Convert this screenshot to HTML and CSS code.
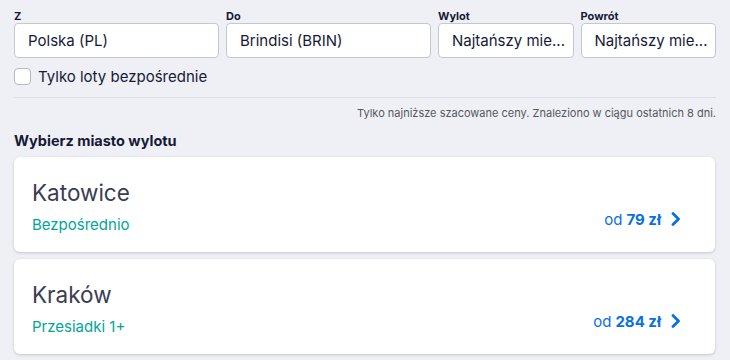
FILE: index.html
```html
<!DOCTYPE html>
<html lang="pl">
<head>
<meta charset="utf-8">
<link rel="stylesheet" href="styles.css">
</head>
<body>
<div class="page">
  <div class="fields">
    <div class="field f-wide">
      <label class="lbl">Z</label>
      <div class="input">Polska (PL)</div>
    </div>
    <div class="field f-wide">
      <label class="lbl">Do</label>
      <div class="input">Brindisi (BRIN)</div>
    </div>
    <div class="field f-narrow">
      <label class="lbl">Wylot</label>
      <div class="input">Najtańszy mie...</div>
    </div>
    <div class="field f-narrow">
      <label class="lbl">Powrót</label>
      <div class="input">Najtańszy mie...</div>
    </div>
  </div>
  <div class="check-row">
    <span class="checkbox"></span>
    <span class="check-label">Tylko loty bezpośrednie</span>
  </div>
  <hr class="divider">
  <p class="note">Tylko najniższe szacowane ceny. Znaleziono w ciągu ostatnich 8 dni.</p>
  <h2 class="heading">Wybierz miasto wylotu</h2>
  <div class="cards">
    <div class="card">
      <div class="card-main">
        <div class="city">Katowice</div>
        <div class="stops">Bezpośrednio</div>
      </div>
      <div class="price">od <b>79 zł</b>
        <svg class="chev" width="10" height="14" viewBox="0 0 10 14"><path d="M2 1.5 L7.5 7 L2 12.5" fill="none" stroke="#0770e3" stroke-width="2.8" stroke-linecap="round" stroke-linejoin="round"/></svg>
      </div>
    </div>
    <div class="card">
      <div class="card-main">
        <div class="city">Kraków</div>
        <div class="stops">Przesiadki 1+</div>
      </div>
      <div class="price">od <b>284 zł</b>
        <svg class="chev" width="10" height="14" viewBox="0 0 10 14"><path d="M2 1.5 L7.5 7 L2 12.5" fill="none" stroke="#0770e3" stroke-width="2.8" stroke-linecap="round" stroke-linejoin="round"/></svg>
      </div>
    </div>
  </div>
</div>
</body>
</html>
```
FILE: styles.css
```css
* { box-sizing: border-box; }
html, body { margin: 0; padding: 0; }
body {
  background: #eff0f5;
  font-family: Inter, "Noto Sans", "Liberation Sans", sans-serif;
  color: #161a36;
  width: 730px;
  height: 360px;
  overflow: hidden;
}
.page { padding: 9px 14px 0 14px; }
.fields { display: flex; gap: 7px; }
.field { display: flex; flex-direction: column; min-width: 0; }
.f-wide { width: 205px; }
.f-narrow { width: 135.5px; flex: 1; }
.lbl {
  font-size: 11px;
  font-weight: 700;
  line-height: 14px;
  height: 14px;
  color: #161a36;
}
.input {
  height: 35px;
  background: #fff;
  border: 1px solid #c2c9cd;
  border-radius: 4px;
  padding: 0 6px 0 13px;
  font-size: 15px;
  line-height: 33px;
  color: #161a36;
  white-space: nowrap;
}
.check-row {
  display: flex;
  align-items: center;
  gap: 7px;
  margin-top: 10px;
  height: 17px;
}
.checkbox {
  width: 17px;
  height: 17px;
  border: 1px solid #b3b9c5;
  border-radius: 4px;
  background: #fff;
}
.check-label { font-size: 15px; color: #161a36; }
.divider {
  border: 0;
  border-top: 1px solid #dddfe6;
  margin: 12px 0 0 0;
}
.note {
  margin: 8px 0 0 0;
  text-align: right;
  font-size: 11px;
  line-height: 14px;
  color: #545860;
}
.heading {
  margin: 12px 0 0 0;
  font-size: 14.5px;
  font-weight: 700;
  line-height: 18px;
  color: #161a36;
}
.cards {
  display: flex;
  flex-direction: column;
  gap: 7px;
  margin-top: 7px;
  width: 701px;
}
.card {
  background: #fff;
  border-radius: 6px;
  box-shadow: 0 1px 3px rgba(37, 32, 31, 0.2);
  height: 95px;
  display: flex;
  justify-content: space-between;
  align-items: center;
  padding: 0 34px 0 18px;
}
.card-main { display: flex; flex-direction: column; padding-top: 4px; }
.city {
  font-size: 22.5px;
  line-height: 28px;
  color: #3b3d55;
}
.stops {
  margin-top: 8px;
  font-size: 15px;
  line-height: 20px;
  color: #00a698;
}
.price {
  display: flex;
  align-items: center;
  gap: 4px;
  margin-top: 29px;
  font-size: 15px;
  color: #0770e3;
}
.price b { font-weight: 700; }
.chev { margin-left: 6px; }
```
